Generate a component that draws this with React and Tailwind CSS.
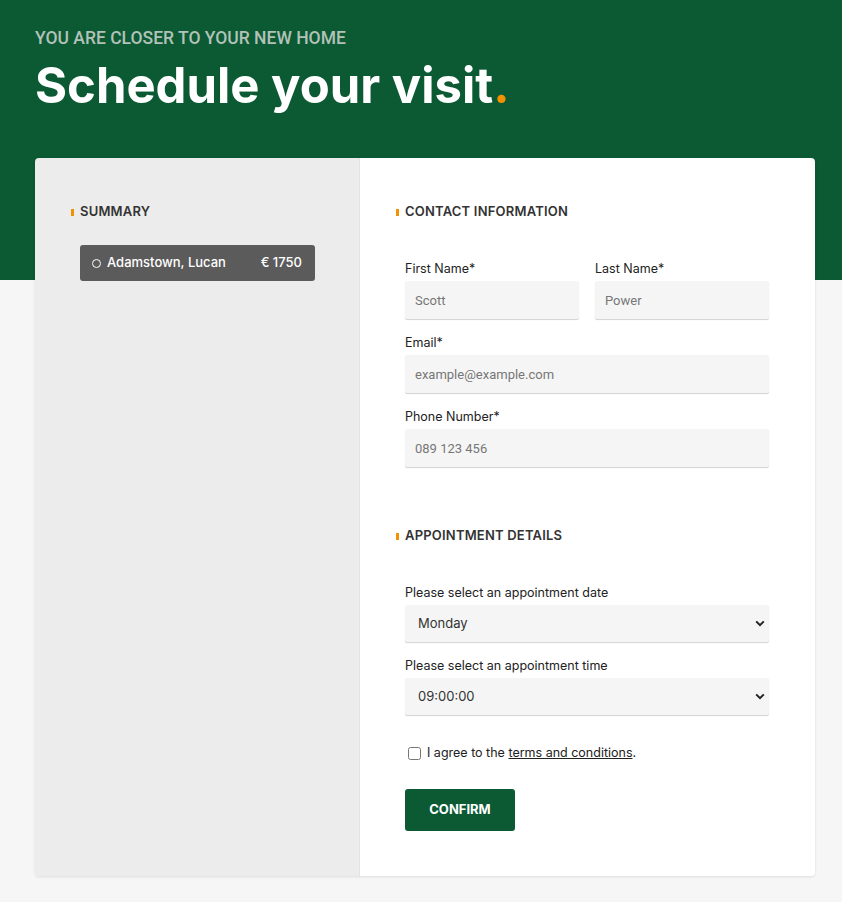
import { useState } from "react";

const body = { fontFamily: "Inter, 'Noto Sans', sans-serif" };
const fira = { fontFamily: "Roboto, 'Open Sans', sans-serif" };

function SectionTitle({ children }) {
  return (
    <div className="flex items-center gap-[6px] h-5">
      <span className="w-[3px] h-[7px] bg-[#f39200]" />
      <h3 className="text-[13px] font-semibold text-[#333] uppercase tracking-[0.2px]">
        {children}
      </h3>
    </div>
  );
}

function Field({ label, value, className = "" }) {
  return (
    <div className={className}>
      <label className="block text-[12.5px] leading-[18px] text-[#222] mb-[3px]">{label}</label>
      <input
        readOnly
        placeholder={value}
        className="w-full h-[38px] px-[10px] bg-[#f5f5f5] rounded-[2px] shadow-[0_1px_1px_rgba(0,0,0,0.18)] text-[13px] text-[#777] placeholder:text-[#777] outline-none"
        style={fira}
      />
    </div>
  );
}

function Select({ label, value, className = "" }) {
  return (
    <div className={className}>
      <label className="block text-[12.5px] leading-[18px] text-[#222] mb-[3px]">{label}</label>
      <div className="h-[37px] pl-[13px] pr-[4px] flex items-center justify-between bg-[#f5f5f5] rounded-[2px] shadow-[0_1px_1px_rgba(0,0,0,0.18)]">
        <span className="text-[13px] text-[#333]">{value}</span>
        <svg width="10" height="7" viewBox="0 0 10 7">
          <path d="M1.2 1.4 L5 5.2 L8.8 1.4" fill="none" stroke="#222" strokeWidth="2" />
        </svg>
      </div>
    </div>
  );
}

export default function App() {
  const [agree, setAgree] = useState(false);

  return (
    <div className="min-h-screen bg-[#f6f6f6]" style={body}>
      {/* Header */}
      <div className="h-[280px] bg-[#0b5a33] pl-[35px] pt-[28px]">
        <p className="text-[17.5px] leading-[20px] font-medium text-[#b3c2b9] uppercase" style={fira}>
          You are closer to your new home
        </p>
        <h1 className="mt-[11px] text-[49px] leading-[54px] font-bold text-white">
          Schedule your visit<span className="text-[#f39200]">.</span>
        </h1>
      </div>

      {/* Card */}
      <div className="mx-[35px] -mt-[122px] w-[780px] h-[718px] flex rounded-[4px] overflow-hidden shadow-[0_1px_3px_rgba(0,0,0,0.1)]">
        <div className="w-[325px] bg-[#ececec] border-r border-[#e3e3e3] pl-[36px] pt-[44px]">
          <SectionTitle>Summary</SectionTitle>
          <div className="ml-[9px] mt-[23px] w-[235px] h-[36px] bg-[#5b5b5b] rounded-[3px] flex items-center justify-between pl-[12px] pr-[13px] text-white text-[13px] font-medium">
            <span className="flex items-center gap-[6px]">
              <span className="w-[9px] h-[9px] rounded-full border border-white" />
              Adamstown, Lucan
            </span>
            <span>€ 1750</span>
          </div>
        </div>

        <div className="flex-1 bg-white pl-[36px] pt-[44px]">
          <SectionTitle>Contact Information</SectionTitle>
          <div className="ml-[9px] w-[364px]">
            <div className="mt-[38px] grid grid-cols-2 gap-[16px]">
              <Field label="First Name*" value="Scott" />
              <Field label="Last Name*" value="Power" />
            </div>
            <Field className="mt-[15px]" label="Email*" value="example@example.com" />
            <Field className="mt-[15px]" label="Phone Number*" value="089 123 456" />
          </div>

          <div className="mt-[59px]">
            <SectionTitle>Appointment Details</SectionTitle>
          </div>
          <div className="ml-[9px] w-[364px]">
            <Select className="mt-[38px]" label="Please select an appointment date" value="Monday" />
            <Select className="mt-[15px]" label="Please select an appointment time" value="09:00:00" />

            <label className="mt-[29px] flex items-center gap-[5px] text-[12.5px] text-[#222] cursor-pointer">
              <input
                type="checkbox"
                checked={agree}
                onChange={() => setAgree(!agree)}
                className="ml-[3px] w-[13px] h-[13px] mr-[1px]"
              />
              <span>
                I agree to the <span className="underline">terms and conditions</span>.
              </span>
            </label>

            <button className="mt-[26px] w-[110px] h-[42px] bg-[#0b5a33] rounded-[3px] text-white text-[13px] font-bold uppercase">
              Confirm
            </button>
          </div>
        </div>
      </div>
    </div>
  );
}
